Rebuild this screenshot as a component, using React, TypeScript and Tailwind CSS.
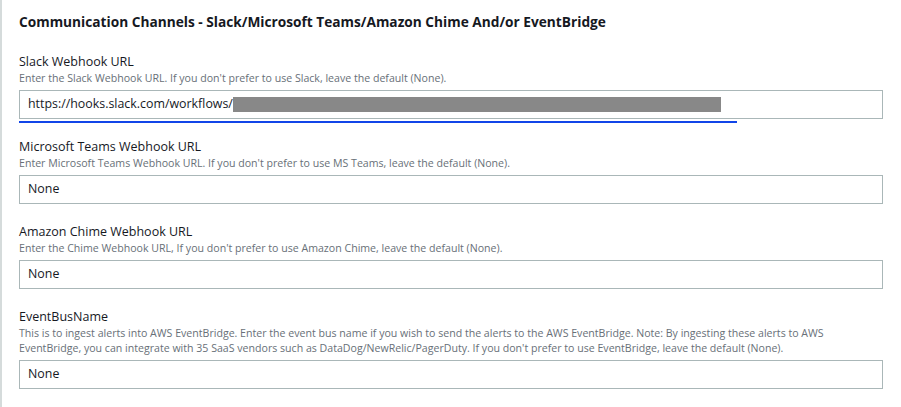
import React from "react";

const font = { fontFamily: '"Open Sans", "Noto Sans", Arial, sans-serif' };

type Field = {
  label: string;
  hint: string[];
  value: React.ReactNode;
  focused?: boolean;
};

const fields: Field[] = [
  {
    label: "Slack Webhook URL",
    hint: ["Enter the Slack Webhook URL. If you don't prefer to use Slack, leave the default (None)."],
    value: (
      <span className="flex items-center">
        https://hooks.slack.com/workflows/
        <span className="inline-block h-[15px] w-[488px] bg-[#888888]" />
      </span>
    ),
    focused: true,
  },
  {
    label: "Microsoft Teams Webhook URL",
    hint: ["Enter Microsoft Teams Webhook URL. If you don't prefer to use MS Teams, leave the default (None)."],
    value: "None",
  },
  {
    label: "Amazon Chime Webhook URL",
    hint: ["Enter the Chime Webhook URL, If you don't prefer to use Amazon Chime, leave the default (None)."],
    value: "None",
  },
  {
    label: "EventBusName",
    hint: [
      "This is to ingest alerts into AWS EventBridge. Enter the event bus name if you wish to send the alerts to the AWS EventBridge. Note: By ingesting these alerts to AWS",
      "EventBridge, you can integrate with 35 SaaS vendors such as DataDog/NewRelic/PagerDuty. If you don't prefer to use EventBridge, leave the default (None).",
    ],
    value: "None",
  },
];

function FieldRow({ field }: { field: Field }) {
  return (
    <div className="flex flex-col">
      <div className="text-[12.5px] leading-[18px] text-[#16191f]">{field.label}</div>
      <div className="text-[10.6px] leading-[15px] text-[#687078]">
        {field.hint.map((line, i) => (
          <div key={i}>{line}</div>
        ))}
      </div>
      <div className="mt-[4px] flex h-[29px] items-center border border-[#aab7b8] bg-white px-[8px] text-[12.4px] text-[#16191f]">
        {field.value}
      </div>
      {field.focused ? (
        <div className="mt-[2px] h-[2px] w-[718px] bg-[#1145e8]" />
      ) : (
        <div className="mt-[2px] h-[2px]" />
      )}
    </div>
  );
}

export default function App() {
  return (
    <div
      className="h-[407px] w-[901px] overflow-hidden border-l-2 border-[#d5dbdb] bg-white pl-[17px] pr-[18px] pt-[12px]"
      style={font}
    >
      <h2 className="text-[13.7px] font-bold leading-[20px] text-[#16191f]">
        Communication Channels - Slack/Microsoft Teams/Amazon Chime And/or EventBridge
      </h2>
      <div className="mt-[21px] flex flex-col gap-[15px]">
        {fields.map((f) => (
          <FieldRow key={f.label} field={f} />
        ))}
      </div>
    </div>
  );
}
